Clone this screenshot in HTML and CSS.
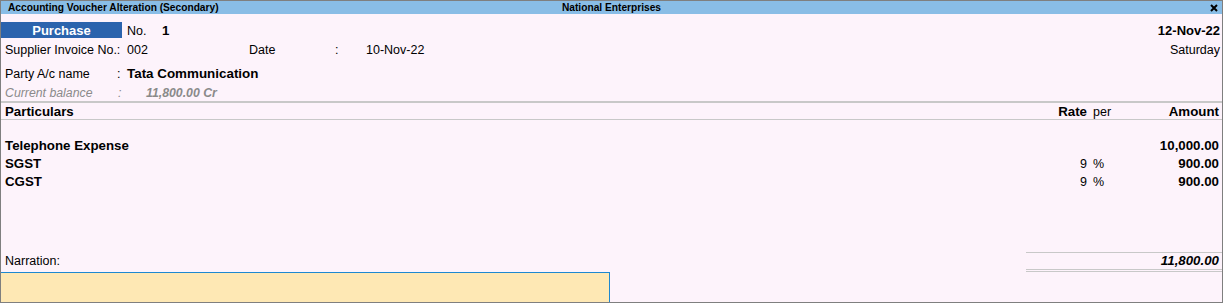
FILE: index.html
```html
<html>
    <head>
        <link rel="stylesheet" href="styles.css">
    </head>
    <body>
        <div class="frame">
            <div class="titleBar">
                <span class="titleLeft">Accounting Voucher Alteration (Secondary)</span>
                <span class="titleCenter">National Enterprises</span>
                <span class="titleRight">
                    <svg class="closeIcon" width="8" height="8" viewBox="0 0 8 8">
                        <path d="M1 1 L7 7 M7 1 L1 7" stroke="#000" stroke-width="2"/>
                    </svg>
                </span>
            </div>

            <div class="header">
                <div class="rowOne">
                    <span class="voucherType">Purchase</span>
                    <span class="noLabel">No.</span>
                    <span class="noValue">1</span>
                    <span class="voucherDate">12-Nov-22</span>
                </div>
                <div class="rowTwo">
                    <span class="label">Supplier Invoice No.:</span>
                    <span class="invoiceNo">002</span>
                    <span class="dateLabel">Date</span>
                    <span class="colonDate">:</span>
                    <span>10-Nov-22</span>
                    <span class="dayName">Saturday</span>
                </div>
                <div class="rowThree">
                    <span class="partyLabel">Party A/c name</span>
                    <span class="colon">:</span>
                    <span class="partyName">Tata Communication</span>
                </div>
                <div class="rowFour">
                    <span class="partyLabel">Current balance</span>
                    <span class="colon">:</span>
                    <span class="balance">11,800.00 Cr</span>
                </div>
            </div>

            <div class="colHead">
                <span class="particulars">Particulars</span>
                <span class="rate">Rate</span>
                <span class="per">per</span>
                <span class="amount">Amount</span>
            </div>

            <div class="entries">
                <div class="entry">
                    <span class="particulars">Telephone Expense</span>
                    <span class="rate"></span>
                    <span class="per"></span>
                    <span class="amount">10,000.00</span>
                </div>
                <div class="entry">
                    <span class="particulars">SGST</span>
                    <span class="rate">9</span>
                    <span class="per">%</span>
                    <span class="amount">900.00</span>
                </div>
                <div class="entry">
                    <span class="particulars">CGST</span>
                    <span class="rate">9</span>
                    <span class="per">%</span>
                    <span class="amount">900.00</span>
                </div>
            </div>

            <div class="footer">
                <div class="narrationRow">
                    <span class="narrationLabel">Narration:</span>
                    <span class="total">11,800.00</span>
                </div>
                <div class="narrationBox"></div>
            </div>
        </div>
    </body>
</html>
```

FILE: styles.css
```css
body {
    margin: 0;
    font-family: "Liberation Sans", Arial, sans-serif;
    font-size: 12.5px;
    color: #000;
}
.frame {
    width: 1223px;
    height: 303px;
    box-sizing: border-box;
    border: 1px solid #7f7f7f;
    background-color: #fdf3fb;
    display: flex;
    flex-direction: column;
}

/* title bar */
.titleBar {
    height: 13px;
    background-color: #89bde6;
    display: grid;
    grid-template-columns: 1fr auto 1fr;
    align-items: center;
    font-size: 10.2px;
    font-weight: bold;
    line-height: 13px;
}
.titleLeft {
    padding-left: 7px;
}
.titleRight {
    text-align: right;
    padding-right: 4px;
}
.closeIcon {
    display: inline-block;
    vertical-align: -1px;
}

/* header block */
.header {
    padding-top: 8px;
}
.rowOne {
    display: flex;
    height: 16px;
    line-height: 18px;
    align-items: flex-start;
}
.voucherType {
    width: 121px;
    height: 16px;
    overflow: hidden;
    background-color: #2b63ad;
    color: #fff;
    font-size: 13px;
    font-weight: bold;
    text-align: center;
}
.noLabel {
    margin-left: 5px;
    width: 35px;
}
.noValue {
    font-size: 13.3px;
    font-weight: bold;
}
.voucherDate {
    margin-left: auto;
    padding-right: 2px;
    font-size: 13px;
    font-weight: bold;
}
.rowTwo {
    display: flex;
    margin-top: 2px;
    height: 18px;
    line-height: 20px;
    padding-left: 4px;
}
.label {
    width: 122px;
}
.invoiceNo {
    width: 122px;
}
.dateLabel {
    width: 86px;
}
.colonDate {
    width: 31px;
}
.dayName {
    margin-left: auto;
    padding-right: 2px;
}
.rowThree {
    display: flex;
    margin-top: 6px;
    height: 18px;
    line-height: 20px;
    padding-left: 4px;
}
.partyLabel {
    width: 112px;
}
.colon {
    width: 10px;
}
.partyName {
    font-size: 13.4px;
    font-weight: bold;
}
.rowFour {
    display: flex;
    margin-top: 1px;
    height: 18px;
    line-height: 20px;
    padding-left: 4px;
    color: #8a8a8a;
    font-size: 12.3px;
    font-style: italic;
}
.rowFour .colon {
    padding-left: 1px;
    width: 28px;
}
.balance {
    font-weight: bold;
}

/* columns */
.colHead, .entry {
    display: grid;
    grid-template-columns: 1fr 86px 40px 90px;
    padding: 0 3px 0 4px;
}
.colHead {
    border-top: 2px solid #c8c8c8;
    border-bottom: 1px solid #c8c8c8;
    height: 16px;
    line-height: 18px;
    font-size: 13.3px;
    font-weight: bold;
}
.colHead .per {
    font-size: 12.5px;
    font-weight: normal;
}
.rate {
    text-align: right;
    padding-right: 2px;
}
.per {
    padding-left: 4px;
}
.amount {
    text-align: right;
}
.entries {
    padding-top: 16px;
    flex: 1;
}
.entry {
    height: 18px;
    line-height: 20px;
    font-size: 13.3px;
    font-weight: bold;
}
.entry .rate, .entry .per {
    font-size: 12.5px;
    font-weight: normal;
}

/* footer */
.narrationRow {
    display: flex;
    padding-left: 4px;
}
.narrationLabel {
    flex: 1;
    line-height: 18px;
}
.total {
    width: 193px;
    height: 16px;
    line-height: 16px;
    padding-right: 3px;
    border-top: 1px solid #c8c8c8;
    border-bottom: 3px double #c8c8c8;
    text-align: right;
    font-size: 13.3px;
    font-weight: bold;
    font-style: italic;
}
.narrationBox {
    width: 609px;
    height: 30px;
    box-sizing: border-box;
    background-color: #fee8b4;
    border-top: 1px solid #1e88d0;
    border-right: 1px solid #1e88d0;
}
```
